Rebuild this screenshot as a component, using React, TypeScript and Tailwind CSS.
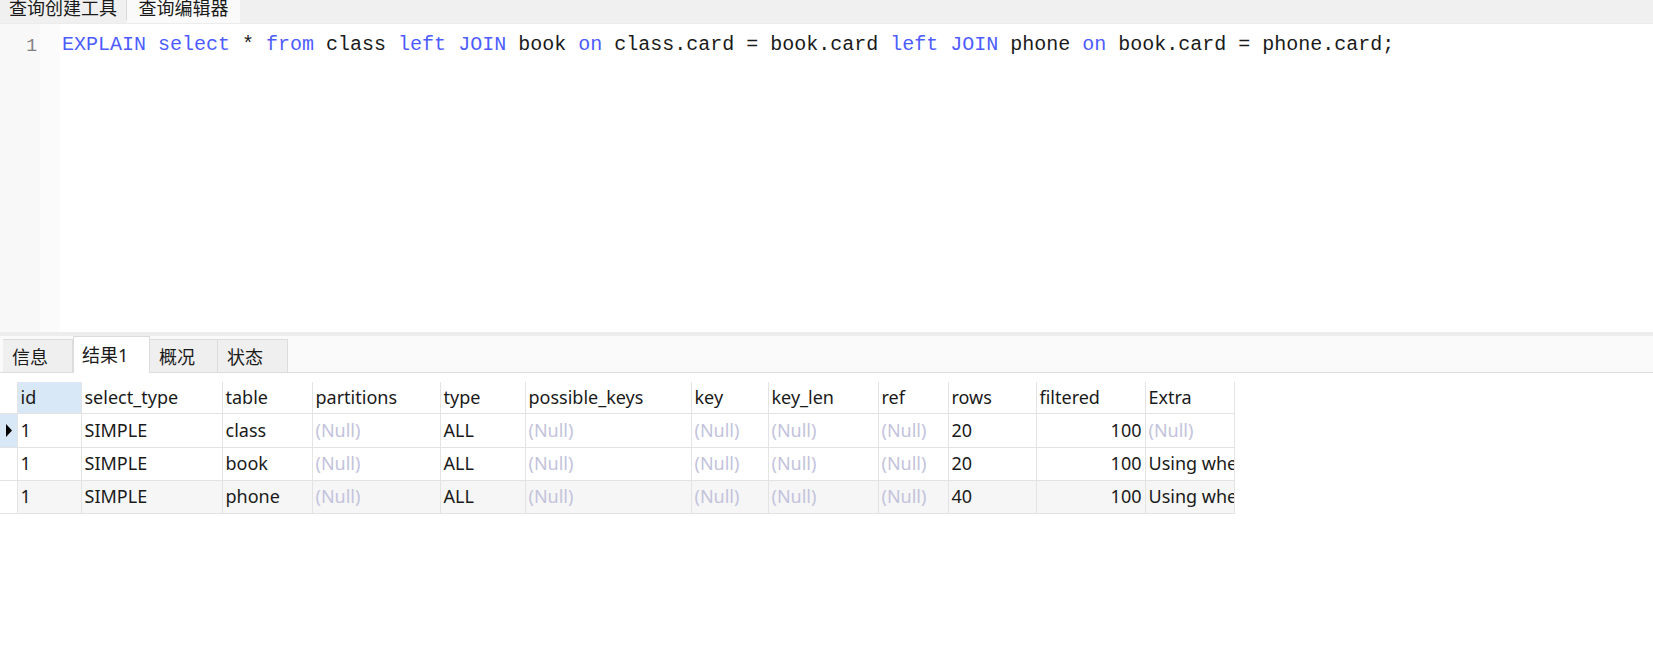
import React from 'react';

const cols = [
  { key: 'id', label: 'id', w: 64 },
  { key: 'select_type', label: 'select_type', w: 141 },
  { key: 'table', label: 'table', w: 90 },
  { key: 'partitions', label: 'partitions', w: 128 },
  { key: 'type', label: 'type', w: 85 },
  { key: 'possible_keys', label: 'possible_keys', w: 166 },
  { key: 'key', label: 'key', w: 77 },
  { key: 'key_len', label: 'key_len', w: 110 },
  { key: 'ref', label: 'ref', w: 70 },
  { key: 'rows', label: 'rows', w: 88 },
  { key: 'filtered', label: 'filtered', w: 109 },
  { key: 'Extra', label: 'Extra', w: 89 },
];

const data: Record<string, string | null>[] = [
  { id: '1', select_type: 'SIMPLE', table: 'class', partitions: null, type: 'ALL', possible_keys: null, key: null, key_len: null, ref: null, rows: '20', filtered: '100', Extra: null },
  { id: '1', select_type: 'SIMPLE', table: 'book', partitions: null, type: 'ALL', possible_keys: null, key: null, key_len: null, ref: null, rows: '20', filtered: '100', Extra: 'Using where' },
  { id: '1', select_type: 'SIMPLE', table: 'phone', partitions: null, type: 'ALL', possible_keys: null, key: null, key_len: null, ref: null, rows: '40', filtered: '100', Extra: 'Using where' },
];

const uiFont = { fontFamily: '"Noto Sans", "Noto Sans CJK SC", sans-serif' };
const mono = { fontFamily: '"Liberation Mono", monospace' };

function Kw({ children }: { children: React.ReactNode }) {
  return <span className="text-[#4d5cff]">{children}</span>;
}

export default function App() {
  return (
    <div className="w-[1653px] h-[648px] bg-white overflow-hidden flex flex-col" style={uiFont}>
      {/* top tabs, cut off at the top edge */}
      <div className="h-[23px] bg-[#f0f0f0] flex shrink-0 overflow-hidden">
        <div className="w-[127px] h-[23px] border-r border-[#d9d9d9] flex justify-center text-[18px] leading-[22px] text-[#1a1a1a] -mt-[3px]">
          查询创建工具
        </div>
        <div className="w-[113px] h-[26px] bg-[#fafafa] flex justify-center text-[18px] leading-[22px] text-[#1a1a1a] -mt-[3px]">
          查询编辑器
        </div>
      </div>

      {/* editor */}
      <div className="h-[309px] flex shrink-0 border-t border-[#ececec]">
        <div className="w-[60px] flex">
          <div className="w-[40px] bg-[#f8f8f8] pt-[9px] text-right pr-[3px]">
            <span className="text-[18px] leading-[24px] text-[#808080]" style={mono}>1</span>
          </div>
          <div className="w-[20px] bg-[#fbfbfb]" />
        </div>
        <div className="flex-1 pl-[2px] pt-[9px]">
          <pre className="text-[20px] leading-[24px] text-[#1a1a1a] whitespace-pre" style={mono}>
            <Kw>EXPLAIN</Kw> <Kw>select</Kw> * <Kw>from</Kw> class <Kw>left</Kw> <Kw>JOIN</Kw> book <Kw>on</Kw> class.card = book.card <Kw>left</Kw> <Kw>JOIN</Kw> phone <Kw>on</Kw> book.card = phone.card;
          </pre>
        </div>
      </div>

      {/* splitter */}
      <div className="h-[4px] bg-[#ededed] shrink-0" />

      {/* result tabs */}
      <div className="h-[37px] bg-[#fafafa] flex items-end pl-[3px] border-b border-[#dcdcdc] shrink-0">
        {[
          { t: '信息', w: 70, a: false },
          { t: '结果1', w: 77, a: true },
          { t: '概况', w: 68, a: false },
          { t: '状态', w: 70, a: false },
        ].map((tab) => (
          <div
            key={tab.t}
            style={{ width: tab.w }}
            className={
              tab.a
                ? 'h-[37px] bg-white border-x border-t border-[#dcdcdc] -mb-px flex items-center pl-[8px] text-[18px] text-[#1a1a1a]'
                : 'h-[33px] bg-[#efefef] border-r border-t border-[#dcdcdc] flex items-center pl-[9px] pt-[3px] text-[18px] text-[#1a1a1a]'
            }
          >
            {tab.t}
          </div>
        ))}
      </div>

      {/* grid */}
      <div className="flex-1 pt-[9px] bg-white">
        <table className="border-collapse table-fixed text-[18px]" style={{ width: 1234 }}>
          <colgroup>
            <col style={{ width: 17 }} />
            {cols.map((c) => (
              <col key={c.key} style={{ width: c.w }} />
            ))}
          </colgroup>
          <thead>
            <tr className="h-[31px]">
              <th className="border border-[#e3e3e3] border-t-0 border-l-0 bg-white" />
              {cols.map((c, i) => (
                <th
                  key={c.key}
                  className={
                    'border border-[#e3e3e3] border-t-0 px-[3px] text-left font-normal text-[#1a1a1a] whitespace-nowrap overflow-hidden ' +
                    (i === 0 ? 'bg-[#d9e8f6]' : 'bg-white')
                  }
                >
                  {c.label}
                </th>
              ))}
            </tr>
          </thead>
          <tbody>
            {data.map((row, r) => (
              <tr key={r} className={'h-[33px] ' + (r === 2 ? 'bg-[#f6f6f6]' : 'bg-white')}>
                <td className={'border border-[#e3e3e3] border-l-0 p-0 ' + (r === 0 ? 'bg-[#d9e8f6]' : 'bg-white')}>
                  {r === 0 && (
                    <svg width="17" height="33" viewBox="0 0 17 33" className="block">
                      <path d="M6 10 L12 16.5 L6 23 Z" fill="#000" />
                    </svg>
                  )}
                </td>
                {cols.map((c) => {
                  const v = row[c.key];
                  const right = c.key === 'filtered';
                  return (
                    <td
                      key={c.key}
                      className={
                        'border border-[#e3e3e3] px-[3px] whitespace-nowrap overflow-hidden ' +
                        (right ? 'text-right ' : 'text-left ') +
                        (v === null ? 'text-[#c3c3dc]' : 'text-[#1a1a1a]')
                      }
                    >
                      {v === null ? '(Null)' : v}
                    </td>
                  );
                })}
              </tr>
            ))}
          </tbody>
        </table>
      </div>
    </div>
  );
}
